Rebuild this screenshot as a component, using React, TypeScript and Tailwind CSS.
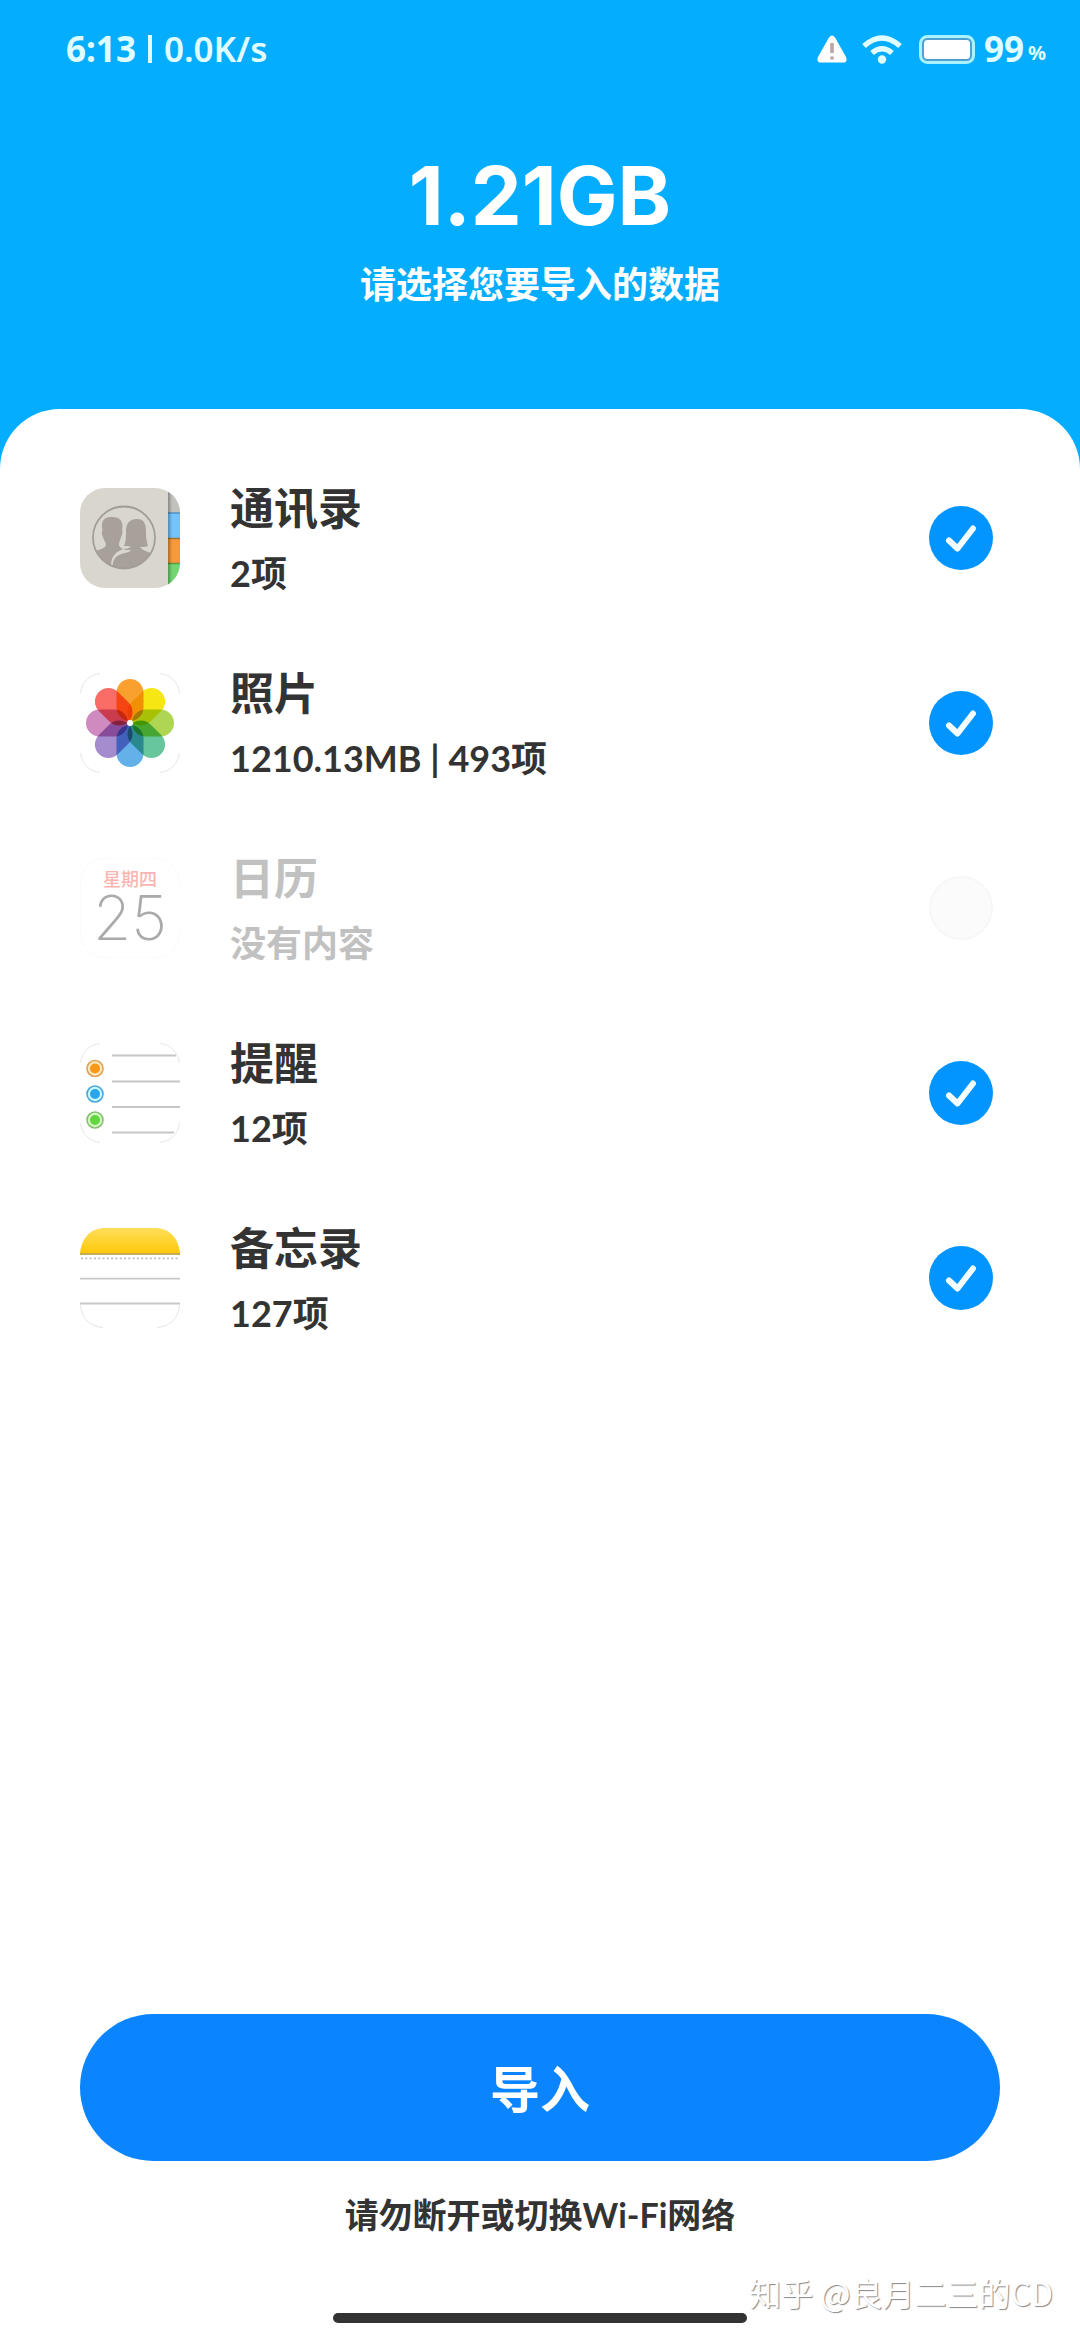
import { useState } from "react";
import type { ReactNode } from "react";

function ContactsIcon() {
  return (
    <svg viewBox="0 0 100 100" className="size-full" aria-hidden="true">
      <defs>
        <clipPath id="contacts-shape">
          <rect width="100" height="100" rx="25" />
        </clipPath>
        <clipPath id="contacts-ring">
          <circle cx="44" cy="49.500" r="31" />
        </clipPath>
        <linearGradient id="contacts-tab" x1="0" x2="1" y1="0" y2="0">
          <stop offset="0" stopColor="#000" stopOpacity="0.3" />
          <stop offset="0.35" stopColor="#000" stopOpacity="0" />
        </linearGradient>
      </defs>
      <g clipPath="url(#contacts-shape)">
        <rect width="100" height="100" fill="#d9d6cd" />
        <rect x="88" y="0" width="12" height="25" fill="#c3c1bd" />
        <rect x="88" y="25" width="12" height="25" fill="#74c4fb" />
        <rect x="88" y="50" width="12" height="25" fill="#f6993a" />
        <rect x="88" y="75" width="12" height="25" fill="#72d672" />
        <path d="M88 25h12" stroke="#4d93c4" strokeWidth="1.500" />
        <path d="M88 50.500h12" stroke="#a8742f" strokeWidth="1.500" />
        <path d="M88 75.500h12" stroke="#5e9a3c" strokeWidth="1.500" />
        <rect x="88" y="0" width="12" height="100" fill="url(#contacts-tab)" />
        <g clipPath="url(#contacts-ring)" fill="#a8a19b">
          <path d="M12 64c6-2 13-3 14-7c0-3-2-4-3-8c-2-3-1-6-.5-7C20 31 26 29 32 29c7 0 12 3 10 13c1 2 0 5-1 7c-1 4-2 5-2 8c.5 2 2 3 4 4C36 64 31 68 31 78H12z" />
          <path d="M43 61c3 0 6-1 8-2c-1-1-3-1-7-1c2-5 2-9 2-15c0-8 4-12 11-12c8 0 9 6 9 14c0 6 1 9 2 13c-2 1-6 1-8 1c3 4 9 5 14 7v20H33c-2-14 2-19 12-21c4-1 6-2 6-3c-3 0-7 0-8-1z" />
        </g>
        <circle cx="44" cy="49.500" r="31" fill="none" stroke="#a39d97" strokeWidth="1.800" />
      </g>
    </svg>
  );
}

const petals = [
  "#faa02e",
  "#f6e614",
  "#aed652",
  "#68c69c",
  "#64b0e9",
  "#a58ccf",
  "#cf8abf",
  "#f96d66",
];

function CornerOutline() {
  return (
    <g fill="none" stroke="#dedede" strokeWidth="0.800">
      <path d="M.5 20C2 9 9 2 20 .5" />
      <path d="M80 .5C91 2 98 9 99.500 20" />
      <path d="M99.500 80C98 91 91 98 80 99.500" />
      <path d="M20 99.500C9 98 2 91 .5 80" />
    </g>
  );
}

function PhotosIcon() {
  return (
    <svg viewBox="0 0 100 100" className="isolate size-full" aria-hidden="true">
      <CornerOutline />
      {petals.map((color, i) => (
        <rect
          key={color}
          x="36.500"
          y="6"
          width="27"
          height="42"
          rx="13.500"
          fill={color}
          className="mix-blend-multiply"
          transform={`rotate(${i * 45} 50 50)`}
        />
      ))}
      <circle cx="50" cy="50" r="3" fill="#fff" />
    </svg>
  );
}

function CalendarIcon() {
  return (
    <span className="flex size-full flex-col items-center rounded-[25px] border border-[#fbfbfb] pt-[10px]">
      <span className="text-[18px] leading-5 font-medium text-[#fbb5b1]">星期四</span>
      <span className="font-[Inter] text-[62px] leading-[58px] font-extralight text-[#aaaaaa]">25</span>
    </span>
  );
}

function RemindersIcon() {
  const dots = [
    { y: 25.5, line: "#d9a25a", gap: "#ffe9bd", fill: "#f7971c" },
    { y: 51, line: "#4aa5d8", gap: "#c4fbff", fill: "#2ba4e8" },
    { y: 77, line: "#86bf74", gap: "#d3fbc0", fill: "#62d640" },
  ];
  return (
    <svg viewBox="0 0 100 100" className="size-full" aria-hidden="true">
      <CornerOutline />
      <path d="M32 12.500h64M32 38.500h68M32 64h68M32 89.500h62" stroke="#c6c6c6" strokeWidth="1.800" />
      {dots.map((d) => (
        <g key={d.y}>
          <circle cx="15" cy={d.y} r="8" fill={d.gap} stroke={d.line} strokeWidth="1.600" />
          <circle cx="15" cy={d.y} r="5" fill={d.fill} />
        </g>
      ))}
    </svg>
  );
}

function NotesIcon() {
  return (
    <svg viewBox="0 0 100 100" className="size-full" aria-hidden="true">
      <defs>
        <linearGradient id="notes-top" x1="0" x2="0" y1="0" y2="1">
          <stop offset="0" stopColor="#ffde58" />
          <stop offset="1" stopColor="#fec90c" />
        </linearGradient>
      </defs>
      <path d="M0 25C2 9 11 0 25 0H75C89 0 98 9 100 25z" fill="url(#notes-top)" />
      <path d="M0 26h100" stroke="#c4ad55" strokeWidth="2" />
      <path d="M1 30.300h99" stroke="#bdbdbd" strokeWidth="1.800" strokeDasharray="2 2.300" />
      <path d="M0 50.700h100M0 75.500h100" stroke="#c8c8c8" strokeWidth="1.800" />
      <path d="M.5 77C2 91 9 98 23 99.500M99.500 77C98 91 91 98 77 99.500" fill="none" stroke="#dedede" strokeWidth="0.800" />
    </svg>
  );
}

type Item = {
  id: string;
  name: string;
  detail: string;
  icon: ReactNode;
  disabled?: boolean;
};

const items: Item[] = [
  { id: "contacts", name: "通讯录", detail: "2项", icon: <ContactsIcon /> },
  { id: "photos", name: "照片", detail: "1210.13MB | 493项", icon: <PhotosIcon /> },
  { id: "calendar", name: "日历", detail: "没有内容", icon: <CalendarIcon />, disabled: true },
  { id: "reminders", name: "提醒", detail: "12项", icon: <RemindersIcon /> },
  { id: "notes", name: "备忘录", detail: "127项", icon: <NotesIcon /> },
];

function StatusBar() {
  return (
    <div className="flex h-[98px] items-center justify-between pr-[34px] pl-[66px] font-['Noto_Sans','Noto_Sans_CJK_SC',sans-serif] text-[#e0fdff]">
      <div className="flex items-center text-[35px] leading-10">
        <span className="font-bold">6:13</span>
        <span className="mx-3 h-7 w-1 bg-current" />
        <span className="font-semibold">0.0K/s</span>
      </div>
      <div className="flex items-center">
        <svg viewBox="0 0 30 28" className="h-7 w-[30px]" aria-label="警告">
          <path d="M12 2.500Q15-1.500 18 2.500L29 22Q31 27.500 26 27.500H4Q-1 27.500 1 22z" fill="#fff" />
          <path d="M15 8v10M15 21.500v3" stroke="#b9a3a3" strokeWidth="3.500" />
        </svg>
        <svg viewBox="0 0 40 29" className="ml-[15px] h-[29px] w-10" aria-label="Wi-Fi">
          <g fill="none" stroke="currentColor" strokeWidth="5.500">
            <path d="M2 11Q20-5 38 11" />
            <path d="M10 18Q20 9.500 30 18" />
          </g>
          <circle cx="20" cy="24.500" r="4.200" fill="currentColor" />
        </svg>
        <svg viewBox="0 0 56 29" className="ml-[17px] h-[29px] w-14" aria-label="电池">
          <rect x="1.500" y="1.500" width="53" height="26" rx="7" fill="#4f9fd0" stroke="#a8f3ff" strokeWidth="3" />
          <rect x="5" y="5" width="46" height="19" rx="3.500" fill="#fff" />
        </svg>
        <span className="ml-[9px] text-[35px] leading-10 font-bold">99</span>
        <span className="ml-1 pt-2 text-[20px] leading-8 font-bold">%</span>
      </div>
    </div>
  );
}

export default function App() {
  const [selected, setSelected] = useState<Record<string, boolean>>({
    contacts: true,
    photos: true,
    reminders: true,
    notes: true,
  });

  return (
    <div className="relative flex min-h-screen flex-col bg-[#05adff] font-[Lato,'Noto_Sans_CJK_SC',sans-serif] text-[#333333]">
      <StatusBar />
      <header className="flex flex-col items-center pt-[50px] pb-[97px] text-white">
        <h1 className="font-[Inter] text-[81px] leading-[96px] font-bold">1.21GB</h1>
        <p className="mt-3 text-[36px] leading-[56px] font-bold">请选择您要导入的数据</p>
      </header>
      <main className="flex flex-1 flex-col rounded-t-[60px] bg-white px-20 pt-9">
        <ul>
          {items.map((item) => (
            <li key={item.id}>
              <label className="flex h-[185px] items-center">
                <span className="size-[100px] shrink-0">{item.icon}</span>
                <span className={item.disabled ? "ml-[50px] flex-1 text-[#c1c1c1]" : "ml-[50px] flex-1"}>
                  <span className="block text-[44px] leading-[70px] font-bold">{item.name}</span>
                  <span className="block text-[36px] leading-[60px] font-bold">{item.detail}</span>
                </span>
                <span className="mr-[7px] grid shrink-0 place-items-center">
                  <input
                    type="checkbox"
                    disabled={item.disabled}
                    checked={!!selected[item.id]}
                    onChange={(e) => setSelected({ ...selected, [item.id]: e.target.checked })}
                    className="peer col-start-1 row-start-1 size-16 appearance-none rounded-full border-2 border-[#f7f7f7] bg-[#fbfbfb] checked:border-0 checked:bg-[#0295ff]"
                  />
                  <svg
                    viewBox="0 0 64 64"
                    className="pointer-events-none invisible col-start-1 row-start-1 size-16 peer-checked:visible"
                    aria-hidden="true"
                  >
                    <path d="M20 34.500L28.500 42.500L44 22.500" fill="none" stroke="#f4fdff" strokeWidth="6" strokeLinecap="round" strokeLinejoin="round" />
                  </svg>
                </span>
              </label>
            </li>
          ))}
        </ul>
        <footer className="mt-auto flex flex-col items-center">
          <button type="button" className="h-[147px] w-full rounded-full bg-[#0b84ff] pt-1 text-[50px] font-bold text-white">
            导入
          </button>
          <p className="mt-7 text-[34px] leading-[52px] font-bold">请勿断开或切换Wi-Fi网络</p>
          <div className="mt-[72px] mb-[17px] h-[10px] w-[414px] rounded-full bg-[#333333]" />
        </footer>
      </main>
      <div className="absolute right-[27px] bottom-7 text-[32px] leading-10 font-normal text-white [text-shadow:1px_1px_1px_#888888] font-['Noto_Sans_CJK_SC',sans-serif]">
        知乎 @良月二三的CD
      </div>
    </div>
  );
}
